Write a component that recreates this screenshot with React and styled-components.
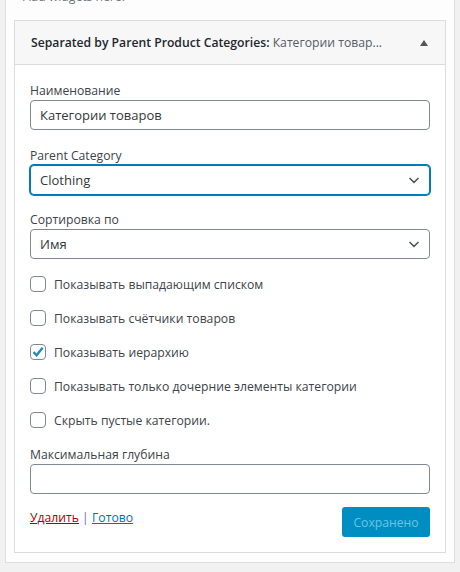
import React from "react";
import styled, { createGlobalStyle } from "styled-components";

const Global = createGlobalStyle`
  html, body { margin: 0; padding: 0; background: #f1f1f1; }
  body { font-family: "Open Sans", "Noto Sans", sans-serif; font-size: 12.2px; color: #3c434a; }
  * { box-sizing: border-box; }
`;

const Page = styled.div`
  width: 460px;
  height: 572px;
  overflow: hidden;
  padding: 0 5px 0 5px;
`;

const Sidebar = styled.div`
  background: #fdfdfd;
  border: 1px solid #dedede;
  border-top: none;
  padding: 0 8px 9px 8px;
`;

const Description = styled.p`
  margin: -13px 0 13px 0;
  padding: 0 9px;
  height: 20px;
  line-height: 20px;
  font-size: 12.2px;
  color: #72777c;
`;

const Widget = styled.div`
  border: 1px solid #dcdcde;
  background: #fff;
`;

const Header = styled.div`
  display: flex;
  align-items: center;
  justify-content: space-between;
  height: 44px;
  padding: 0 16px 0 16px;
  background: #f7f7f7;
  border-bottom: 1px solid #dcdcde;
`;

const Title = styled.h3`
  margin: 0;
  font-size: 12.2px;
  font-weight: 600;
  color: #23282d;
  white-space: nowrap;
`;

const InTitle = styled.span`
  font-weight: 400;
  color: #555d66;
`;

const Toggle = styled.span`
  width: 0;
  height: 0;
  border-left: 4px solid transparent;
  border-right: 4px solid transparent;
  border-bottom: 6px solid #555;
  margin-right: 1px;
`;

const Body = styled.div`
  padding: 17px 15px 15px 15px;
`;

const Field = styled.div`
  margin-bottom: ${(p) => p.$mb ?? 17}px;
`;

const Label = styled.label`
  display: block;
  line-height: 18px;
  font-size: 12.2px;
  color: #3c434a;
`;

const TextInput = styled.input`
  display: block;
  width: 100%;
  height: 30px;
  padding: 0 9px;
  border: 1px solid #7e8993;
  border-radius: 4px;
  font-family: inherit;
  font-size: 13px;
  color: #32373c;
  background: #fff;
  outline: none;
`;

const SelectBox = styled.div`
  position: relative;
  display: flex;
  align-items: center;
  height: 30px;
  padding: 0 9px;
  border: 1px solid ${(p) => (p.$focus ? "#007cba" : "#7e8993")};
  box-shadow: ${(p) => (p.$focus ? "0 0 0 1px #007cba" : "none")};
  border-radius: 4px;
  font-size: 13px;
  color: #32373c;
  background: #fff;
`;

const Chevron = styled.svg`
  position: absolute;
  right: 9px;
  top: 50%;
  margin-top: -5px;
`;

const Checks = styled.div`
  display: flex;
  flex-direction: column;
  gap: 18px;
  margin-bottom: 18px;
`;

const CheckRow = styled.label`
  display: flex;
  align-items: center;
  gap: 8px;
  height: 16px;
  font-size: 12.2px;
  color: #3c434a;
`;

const Box = styled.span`
  flex: none;
  width: 16px;
  height: 16px;
  border: 1px solid #7e8993;
  border-radius: 4px;
  background: #fff;
  display: flex;
  align-items: center;
  justify-content: center;
`;

const Actions = styled.div`
  display: flex;
  justify-content: space-between;
  align-items: flex-start;
  margin-top: 13px;
`;

const Links = styled.div`
  margin-top: 2px;
  font-size: 12.2px;
  color: #72777c;
  line-height: 18px;
`;

const Link = styled.a`
  color: ${(p) => (p.$danger ? "#a00" : "#0073aa")};
  text-decoration: underline;
  cursor: pointer;
`;

const SaveButton = styled.button`
  width: 88px;
  height: 30px;
  border: none;
  border-radius: 3px;
  background: #008ec2;
  color: #66c6e4;
  font-family: inherit;
  font-size: 12.2px;
  padding: 0;
`;

const ChevronIcon = () => (
  <Chevron width="12" height="10" viewBox="0 0 12 10">
    <path d="M1.5 3 L6 7.3 L10.5 3" fill="none" stroke="#50575e" strokeWidth="1.6" />
  </Chevron>
);

const checks = [
  ["Показывать выпадающим списком", false],
  ["Показывать счётчики товаров", false],
  ["Показывать иерархию", true],
  ["Показывать только дочерние элементы категории", false],
  ["Скрыть пустые категории.", false],
];

export default function App() {
  return (
    <>
      <Global />
      <Page>
        <Sidebar>
          <Description>Add widgets here.</Description>
          <Widget>
            <Header>
              <Title>
                Separated by Parent Product Categories: <InTitle>Категории товар...</InTitle>
              </Title>
              <Toggle />
            </Header>
            <Body>
              <Field>
                <Label>Наименование</Label>
                <TextInput defaultValue="Категории товаров" />
              </Field>
              <Field $mb={16}>
                <Label>Parent Category</Label>
                <SelectBox $focus>
                  Clothing
                  <ChevronIcon />
                </SelectBox>
              </Field>
              <Field>
                <Label>Сортировка по</Label>
                <SelectBox>
                  Имя
                  <ChevronIcon />
                </SelectBox>
              </Field>
              <Checks>
                {checks.map(([text, on]) => (
                  <CheckRow key={text}>
                    <Box>
                      {on && (
                        <svg width="14" height="14" viewBox="0 0 14 14">
                          <path d="M2.5 7.2 L5.6 10.3 L11.6 2.8" fill="none" stroke="#1e8cbe" strokeWidth="2.4" />
                        </svg>
                      )}
                    </Box>
                    {text}
                  </CheckRow>
                ))}
              </Checks>
              <Field $mb={0}>
                <Label>Максимальная глубина</Label>
                <TextInput />
              </Field>
              <Actions>
                <Links>
                  <Link $danger>Удалить</Link> | <Link>Готово</Link>
                </Links>
                <SaveButton>Сохранено</SaveButton>
              </Actions>
            </Body>
          </Widget>
        </Sidebar>
      </Page>
    </>
  );
}
